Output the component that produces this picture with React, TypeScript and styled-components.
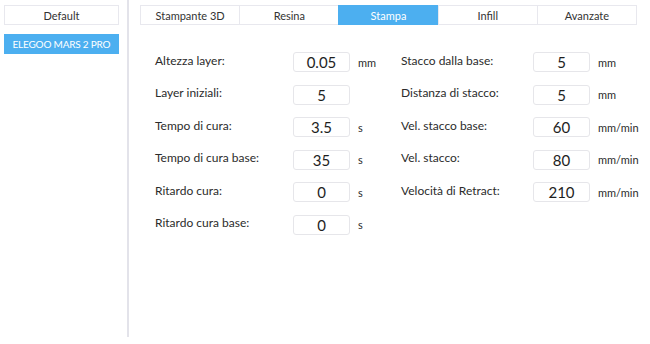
import React, { useState } from "react";
import styled, { createGlobalStyle } from "styled-components";

const GlobalStyle = createGlobalStyle`
  html, body {
    margin: 0;
    padding: 0;
    background: #ffffff;
    font-family: "Lato", "Open Sans", sans-serif;
    color: #2b2b2b;
  }
`;

const StyledPage = styled.div`
  display: flex;
  width: 650px;
  height: 344px;
`;

const StyledSidebar = styled.div`
  width: 123px;
  height: 332px;
  padding: 5px 0 0 4px;
  display: flex;
  flex-direction: column;
  gap: 9px;
  border-right: 2px solid #e3e3ea;
`;

const StyledProfile = styled.div<{ $active?: boolean }>`
  width: 115px;
  height: 20px;
  box-sizing: border-box;
  display: flex;
  align-items: center;
  justify-content: center;
  font-size: ${(p) => (p.$active ? "10px" : "11px")};
  letter-spacing: ${(p) => (p.$active ? "-0.2px" : "0")};
  border: 1px solid ${(p) => (p.$active ? "#4caff0" : "#e8e8ee")};
  background: ${(p) => (p.$active ? "#4caff0" : "#ffffff")};
  color: ${(p) => (p.$active ? "#ffffff" : "#333333")};
`;

const StyledMain = styled.div`
  flex: 1;
  padding: 5px 0 0 11px;
`;

const StyledTabs = styled.div`
  display: flex;
  width: 497px;
  height: 20px;
`;

const StyledTab = styled.div<{ $active?: boolean }>`
  flex: 1;
  box-sizing: border-box;
  display: flex;
  align-items: center;
  justify-content: center;
  font-size: 11px;
  cursor: pointer;
  border: 1px solid ${(p) => (p.$active ? "#4caff0" : "#e8e8ee")};
  margin-left: -1px;
  background: ${(p) => (p.$active ? "#4caff0" : "#ffffff")};
  color: ${(p) => (p.$active ? "#ffffff" : "#333333")};
  &:first-child {
    margin-left: 0;
  }
`;

const StyledForm = styled.div`
  display: flex;
  padding: 27px 0 0 15px;
`;

const StyledColumn = styled.div<{ $width: number }>`
  width: ${(p) => p.$width}px;
  display: flex;
  flex-direction: column;
  gap: 12.5px;
`;

const StyledRow = styled.div<{ $label: number }>`
  display: grid;
  grid-template-columns: ${(p) => p.$label}px 57px auto;
  align-items: center;
  column-gap: 8px;
  height: 20px;
`;

const StyledLabel = styled.span`
  font-size: 12px;
  margin-top: -4px;
  white-space: nowrap;
`;

const StyledValue = styled.div`
  height: 20px;
  box-sizing: border-box;
  border: 1px solid #e6e6ea;
  border-radius: 3px;
  display: flex;
  align-items: center;
  justify-content: center;
  font-size: 15px;
  color: #1e1e1e;
`;

const StyledUnit = styled.span`
  font-size: 11px;
`;

interface IField {
  label: string
  value: string
  unit: string
}

const tabs = ["Stampante 3D", "Resina", "Stampa", "Infill", "Avanzate"];

const leftFields: IField[] = [
  { label: "Altezza layer:", value: "0.05", unit: "mm" },
  { label: "Layer iniziali:", value: "5", unit: "" },
  { label: "Tempo di cura:", value: "3.5", unit: "s" },
  { label: "Tempo di cura base:", value: "35", unit: "s" },
  { label: "Ritardo cura:", value: "0", unit: "s" },
  { label: "Ritardo cura base:", value: "0", unit: "s" },
];

const rightFields: IField[] = [
  { label: "Stacco dalla base:", value: "5", unit: "mm" },
  { label: "Distanza di stacco:", value: "5", unit: "mm" },
  { label: "Vel. stacco base:", value: "60", unit: "mm/min" },
  { label: "Vel. stacco:", value: "80", unit: "mm/min" },
  { label: "Velocità di Retract:", value: "210", unit: "mm/min" },
];

const FieldColumn = ({ fields, width, label }: { fields: IField[], width: number, label: number }) => (
  <StyledColumn $width={width}>
    {fields.map((f) => (
      <StyledRow key={f.label} $label={label}>
        <StyledLabel>{f.label}</StyledLabel>
        <StyledValue>{f.value}</StyledValue>
        <StyledUnit>{f.unit}</StyledUnit>
      </StyledRow>
    ))}
  </StyledColumn>
);

const App = () => {
  const [tab, setTab] = useState<string>("Stampa");

  return (
    <>
      <GlobalStyle />
      <StyledPage>
        <StyledSidebar>
          <StyledProfile>Default</StyledProfile>
          <StyledProfile $active>ELEGOO MARS 2 PRO</StyledProfile>
        </StyledSidebar>
        <StyledMain>
          <StyledTabs>
            {tabs.map((t) => (
              <StyledTab key={t} $active={t === tab} onClick={() => setTab(t)}>
                {t}
              </StyledTab>
            ))}
          </StyledTabs>
          <StyledForm>
            <FieldColumn fields={leftFields} width={246} label={130} />
            <FieldColumn fields={rightFields} width={240} label={124} />
          </StyledForm>
        </StyledMain>
      </StyledPage>
    </>
  );
};

export default App;
